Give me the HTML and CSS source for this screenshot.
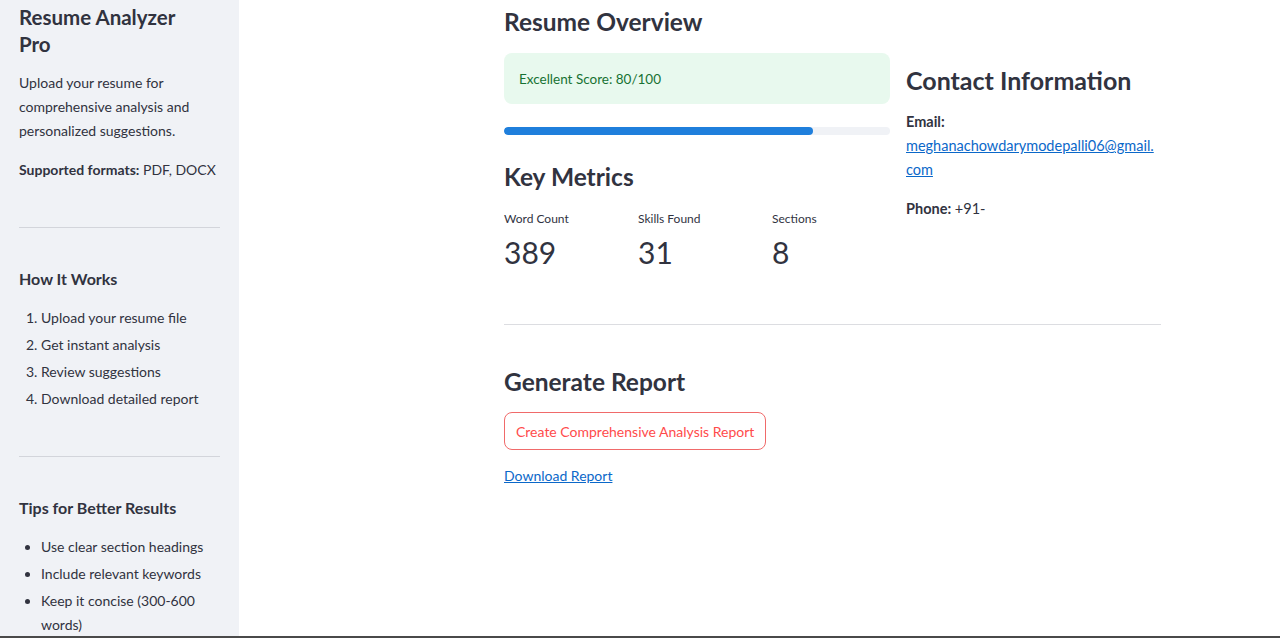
FILE: index.html
```html
<!DOCTYPE html>
<html lang="en">
<head>
<meta charset="utf-8">
<title>Resume Analyzer Pro</title>
<link rel="stylesheet" href="styles.css">
</head>
<body>
<div class="app">
  <aside class="sidebar">
    <h1 class="side-title">Resume Analyzer Pro</h1>
    <p class="side-text">Upload your resume for comprehensive analysis and personalized suggestions.</p>
    <p class="side-text formats"><strong>Supported formats:</strong> PDF, DOCX</p>
    <hr class="side-rule">
    <h3 class="side-heading">How It Works</h3>
    <ol class="side-list">
      <li>Upload your resume file</li>
      <li>Get instant analysis</li>
      <li>Review suggestions</li>
      <li>Download detailed report</li>
    </ol>
    <hr class="side-rule">
    <h3 class="side-heading">Tips for Better Results</h3>
    <ul class="side-list bullets">
      <li>Use clear section headings</li>
      <li>Include relevant keywords</li>
      <li>Keep it concise (300-600 words)</li>
    </ul>
  </aside>
  <main class="main">
    <div class="content">
      <h2 class="section-title">Resume Overview</h2>
      <div class="columns">
        <div class="col-left">
          <div class="alert">Excellent Score: 80/100</div>
          <div class="progress"><div class="progress-fill" style="width:80%"></div></div>
          <h2 class="section-title metrics-title">Key Metrics</h2>
          <div class="metrics">
            <div class="metric">
              <div class="metric-label">Word Count</div>
              <div class="metric-value">389</div>
            </div>
            <div class="metric">
              <div class="metric-label">Skills Found</div>
              <div class="metric-value">31</div>
            </div>
            <div class="metric">
              <div class="metric-label">Sections</div>
              <div class="metric-value">8</div>
            </div>
          </div>
        </div>
        <div class="col-right">
          <h2 class="section-title contact-title">Contact Information</h2>
          <p class="contact-line"><strong>Email:</strong><br><a href="#" class="link email">meghanachowdarymodepalli06@gmail.<wbr>com</a></p>
          <p class="contact-line phone"><strong>Phone:</strong> +91-</p>
        </div>
      </div>
      <hr class="main-rule">
      <h2 class="section-title report-title">Generate Report</h2>
      <button class="btn" type="button">Create Comprehensive Analysis Report</button>
      <p class="download"><a href="#" class="link">Download Report</a></p>
    </div>
  </main>
</div>
</body>
</html>
```
FILE: styles.css
```css
* { box-sizing: border-box; }
html, body { margin: 0; padding: 0; }
body {
  font-family: "Lato", "Liberation Sans", sans-serif;
  color: #31333f;
  background: #ffffff;
}
.app {
  display: flex;
  height: 638px;
  overflow: hidden;
  border-bottom: 2px solid #4a4a4a;
}
.sidebar {
  width: 239px;
  flex: 0 0 239px;
  background: #f0f2f6;
  padding: 4px 19px 0 19px;
  overflow: hidden;
}
.side-title {
  margin: 0;
  max-width: 175px;
  font-size: 20.5px;
  line-height: 27px;
  font-weight: 700;
  color: #31333f;
}
.side-text {
  margin: 13px 0 0 0;
  font-size: 14px;
  line-height: 24px;
}
.side-text.formats { margin-top: 15px; }
.side-text strong { font-weight: 700; }
.side-rule {
  border: 0;
  border-top: 1px solid #d3d5db;
  margin: 45px 0 0 0;
}
.side-heading {
  margin: 39px 0 0 0;
  font-size: 16px;
  line-height: 24px;
  font-weight: 700;
}
.side-list {
  margin: 15px 0 0 0;
  padding-left: 22px;
  font-size: 14px;
  line-height: 24px;
}
.side-list li { margin-bottom: 3px; }
.side-list li::marker { color: #31333f; }
.main {
  flex: 1;
  padding-left: 265px;
}
.content { width: 657px; }
.section-title {
  margin: 5px 0 0 0;
  font-size: 24.5px;
  line-height: 34px;
  font-weight: 700;
  color: #31333f;
}
.columns {
  display: flex;
  gap: 16px;
  margin-top: 14px;
}
.col-left { width: 386px; flex: 0 0 386px; }
.col-right { flex: 1; min-width: 0; padding-top: 10px; }
.alert {
  background: #e8f9ee;
  color: #177233;
  border-radius: 8px;
  height: 51px;
  padding: 0 15px;
  display: flex;
  align-items: center;
  font-size: 13.5px;
}
.progress {
  margin-top: 23px;
  height: 8px;
  background: #f0f2f6;
  border-radius: 4px;
  overflow: hidden;
}
.progress-fill {
  height: 100%;
  background: #1f7fdc;
  border-radius: 4px;
}
.metrics-title { margin-top: 25px; }
.metrics {
  display: grid;
  grid-template-columns: 134px 134px 1fr;
  margin-top: 15px;
}
.metric-label {
  font-size: 12px;
  line-height: 20px;
}
.metric-value {
  margin-top: 2px;
  font-size: 30px;
  line-height: 43px;
  font-weight: 400;
}
.contact-title { margin-top: 0; font-size: 25px; }
.contact-line {
  margin: 13px 0 0 0;
  font-size: 14.5px;
  line-height: 24px;
}
.contact-line.phone { margin-top: 15px; }
.contact-line strong { font-weight: 700; }
.email { overflow-wrap: anywhere; }
.link {
  color: #0b68c9;
  text-decoration: underline;
}
.main-rule {
  border: 0;
  border-top: 1px solid #dcdde1;
  margin: 50px 0 0 0;
}
.report-title { margin-top: 40px; }
.btn {
  display: block;
  margin-top: 13px;
  height: 38px;
  padding: 0 11px;
  background: #ffffff;
  border: 1px solid #f06a6a;
  border-radius: 8px;
  color: #ff4b4b;
  font-family: inherit;
  font-size: 14px;
}
.download {
  margin: 14px 0 0 0;
  font-size: 14px;
  line-height: 24px;
}
```
